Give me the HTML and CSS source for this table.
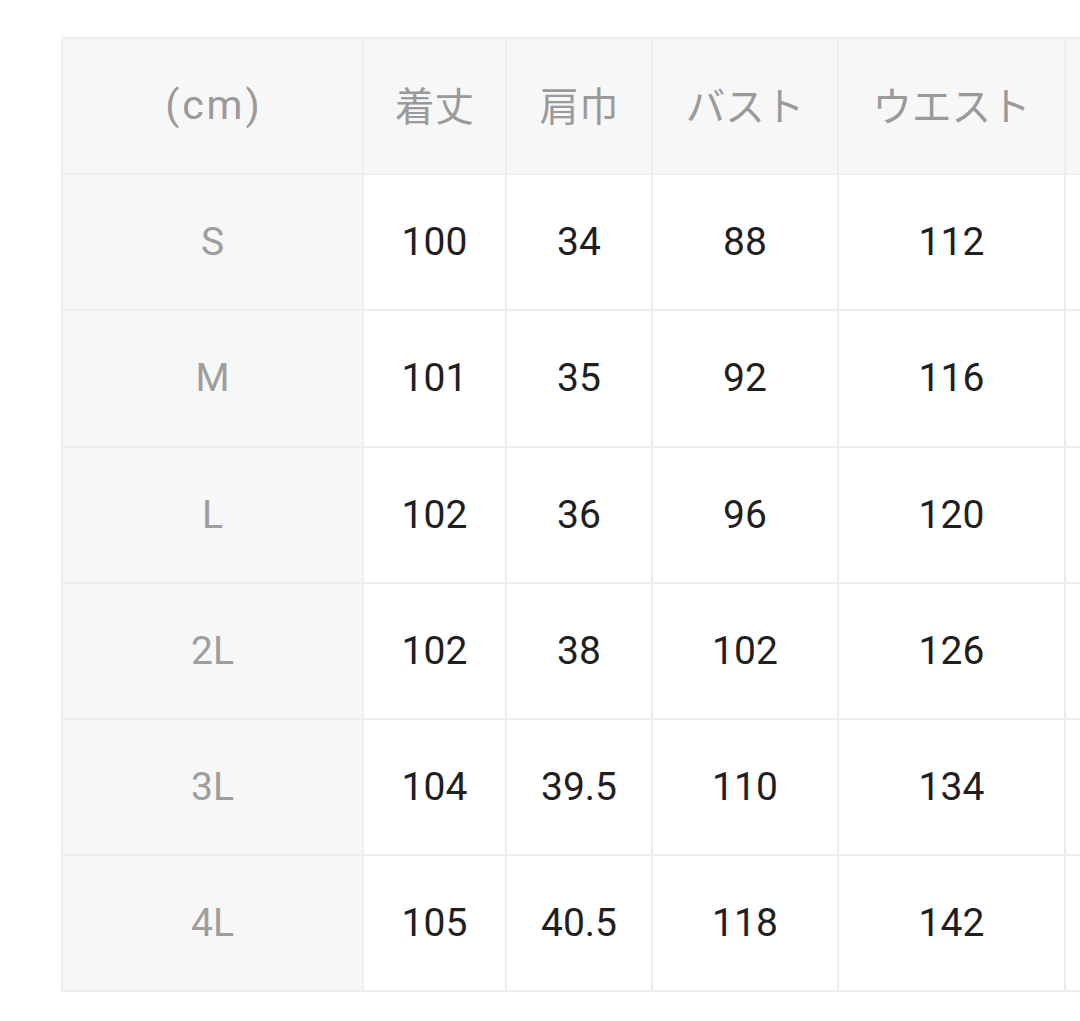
FILE: index.html
```html
<!DOCTYPE html>
<html lang="ja">
<head>
<meta charset="utf-8">
<link rel="stylesheet" href="styles.css">
</head>
<body>
<div class="sheet">
  <div class="cell head unit">(cm)</div>
  <div class="cell head jp">着丈</div>
  <div class="cell head jp">肩巾</div>
  <div class="cell head jp">バスト</div>
  <div class="cell head jp">ウエスト</div>
  <div class="cell head"></div>

  <div class="cell size">S</div>
  <div class="cell">100</div><div class="cell">34</div><div class="cell">88</div><div class="cell">112</div><div class="cell"></div>

  <div class="cell size">M</div>
  <div class="cell">101</div><div class="cell">35</div><div class="cell">92</div><div class="cell">116</div><div class="cell"></div>

  <div class="cell size">L</div>
  <div class="cell">102</div><div class="cell">36</div><div class="cell">96</div><div class="cell">120</div><div class="cell"></div>

  <div class="cell size">2L</div>
  <div class="cell">102</div><div class="cell">38</div><div class="cell">102</div><div class="cell">126</div><div class="cell"></div>

  <div class="cell size">3L</div>
  <div class="cell">104</div><div class="cell">39.5</div><div class="cell">110</div><div class="cell">134</div><div class="cell"></div>

  <div class="cell size">4L</div>
  <div class="cell">105</div><div class="cell">40.5</div><div class="cell">118</div><div class="cell">142</div><div class="cell"></div>
</div>
</body>
</html>
```
FILE: styles.css
```css
html, body {
  margin: 0;
  padding: 0;
  background: #ffffff;
  overflow: hidden;
}
body {
  width: 1080px;
  height: 1021px;
  font-family: Roboto, "Noto Sans CJK JP", sans-serif;
}
.sheet {
  display: grid;
  width: max-content;
  margin: 37px 0 0 61px;
  padding: 2px;
  gap: 2px;
  background: #eeeeee;
  grid-template-columns: 299px 141px 144px 184px 225px 200px;
  grid-auto-rows: 134.2px;
}
.cell {
  background: #ffffff;
  display: flex;
  align-items: center;
  justify-content: center;
  font-size: 39px;
  color: #1f1f1f;
}
.head {
  background: #f7f7f7;
  color: #9a9a9a;
  font-size: 38px;
}
.unit {
  font-size: 41px;
  letter-spacing: 3px;
  padding-left: 3px;
  padding-bottom: 2px;
}
.jp {
  font-family: "Noto Sans CJK JP", sans-serif;
  font-size: 39.5px;
  padding-bottom: 6px;
}
.size {
  background: #f7f7f7;
  color: #9e9e9e;
}
```
